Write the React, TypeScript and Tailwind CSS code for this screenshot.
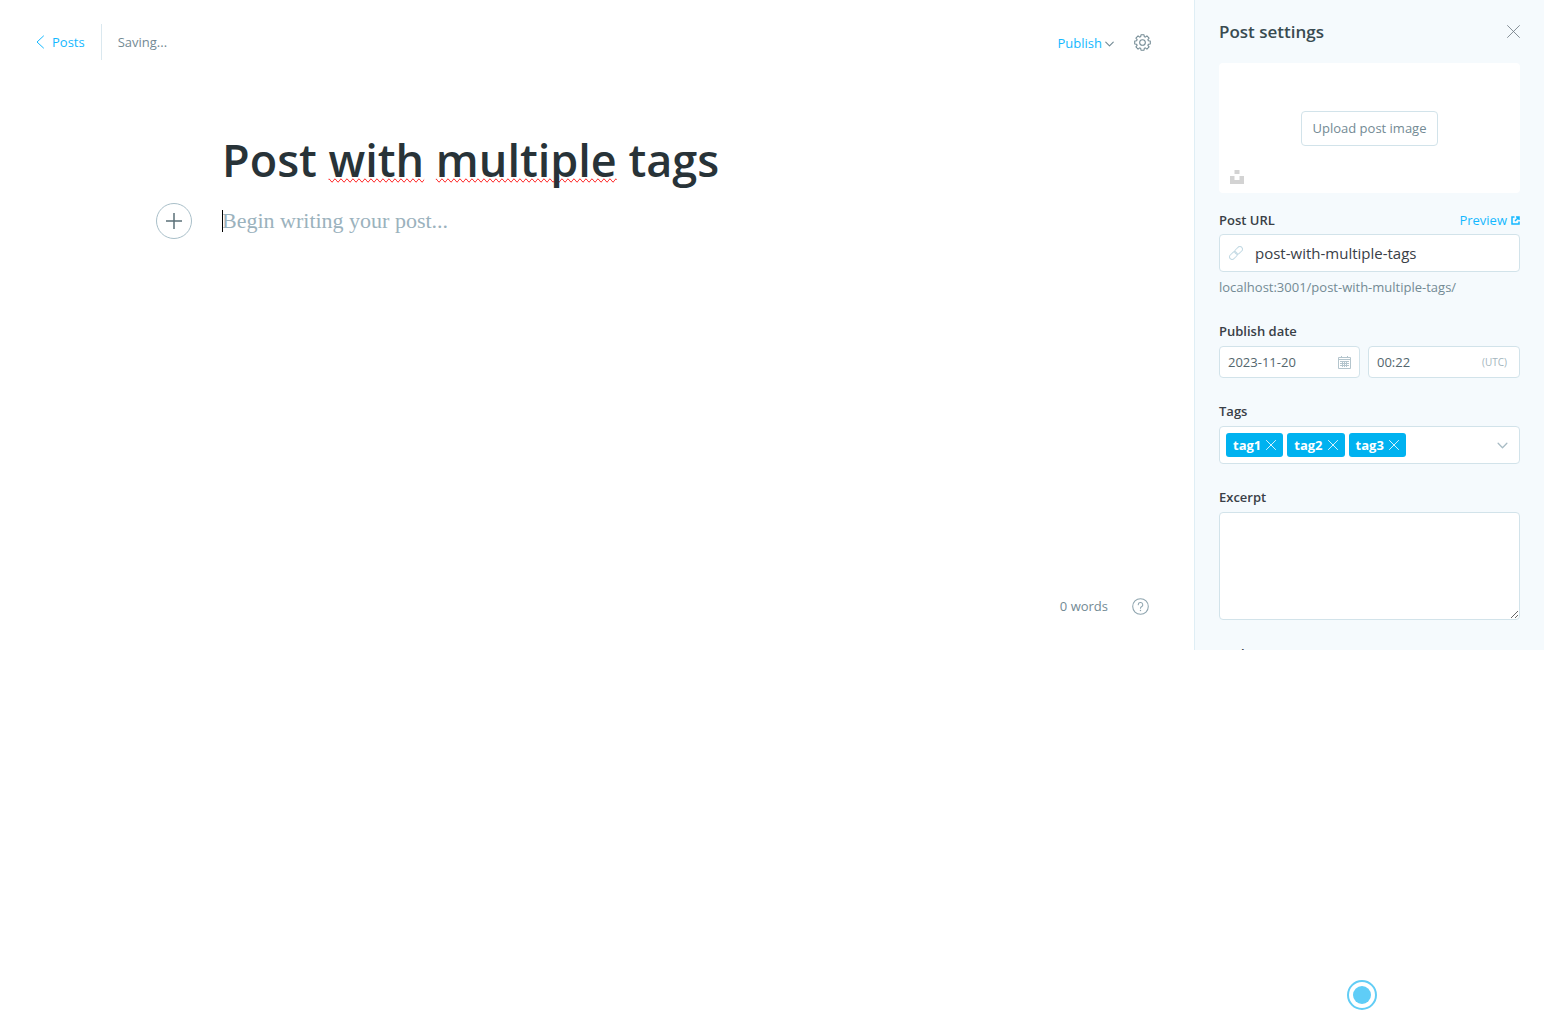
import { useId } from "react";
import type { ReactNode } from "react";

const label = "block text-[13px] leading-[18px] font-semibold text-[#394047]";
const field = "rounded border border-[#d2e3ea] bg-white";

function CloseIcon({ className }: { className: string }) {
  return (
    <svg viewBox="0 0 24 24" fill="none" stroke="currentColor" strokeLinecap="round" className={className} aria-hidden="true">
      <path d="M1 1 23 23M23 1 1 23" />
    </svg>
  );
}

function ChevronDown({ className }: { className: string }) {
  return (
    <svg viewBox="0 0 12 8" fill="none" stroke="currentColor" strokeWidth="1.5" className={className} aria-hidden="true">
      <path d="M1 1.5 6 6.5 11 1.5" strokeLinecap="round" strokeLinejoin="round" />
    </svg>
  );
}

// Outline of an eight-toothed gear centred on (12, 12).
const gearPoints = Array.from({ length: 8 }, (_, tooth) =>
  [[-17, 8.6], [-11, 11.2], [11, 11.2], [17, 8.6]].map(([offset, radius]) => {
    const angle = ((tooth * 45 + offset) * Math.PI) / 180;
    return (12 + radius * Math.sin(angle)).toFixed(2) + "," + (12 - radius * Math.cos(angle)).toFixed(2);
  }).join(" ")
).join(" ");

function GearIcon() {
  return (
    <svg viewBox="0 0 24 24" fill="none" stroke="currentColor" strokeWidth="1.5" strokeLinejoin="round" className="size-[17px]" aria-hidden="true">
      <circle cx="12" cy="12" r="4" />
      <polygon points={gearPoints} />
    </svg>
  );
}

function Tag({ children }: { children: string }) {
  return (
    <li className="flex h-6 items-center gap-[5px] rounded-[3px] bg-[#00b2f0] px-[7px] text-[13px] font-bold text-white">
      <span className="pt-0.5">{children}</span>
      <button type="button" aria-label={"Remove " + children}>
        <CloseIcon className="size-[10px] stroke-2" />
      </button>
    </li>
  );
}

function Group({ title, children }: { title: string; children: (id: string) => ReactNode }) {
  const id = useId();
  return (
    <div>
      <label htmlFor={id} className={label + " mb-1.5"}>{title}</label>
      {children(id)}
    </div>
  );
}

function Editor() {
  return (
    <main className="flex min-w-0 flex-1 flex-col">
      <header className="flex h-[84px] items-center justify-between pl-9 pr-[43px] text-[13px]">
        <div className="flex h-9 items-center">
          <a href="#posts" className="flex items-center gap-2 text-[#14b8ff]">
            <svg viewBox="0 0 8 14" fill="none" stroke="currentColor" className="h-[14px] w-2" aria-hidden="true">
              <path d="M7.5 1 1 7l6.5 6" strokeLinecap="round" strokeLinejoin="round" />
            </svg>
            <span className="pt-0.5">Posts</span>
          </a>
          <span className="mx-4 h-9 w-px bg-[#dae8ef]" />
          <span className="pt-0.5 text-[#738a94]">Saving...</span>
        </div>
        <div className="flex items-center gap-5">
          <button type="button" className="flex items-center gap-[3px] pt-[3px] text-[#14b8ff]">
            Publish
            <ChevronDown className="h-[6px] w-[9px] text-[#738a94]" />
          </button>
          <button type="button" aria-label="Settings" className="text-[#738a94]"><GearIcon /></button>
        </div>
      </header>

      <div className="mx-auto w-full max-w-[750px] flex-1 pt-[46px]">
        <h1 className="text-[45px] leading-[60px] font-semibold text-[#283338]">
          Post <span className="[text-decoration-line:spelling-error]">with</span>{" "}
          <span className="[text-decoration-line:spelling-error]">multiple</span> tags
        </h1>
        <div className="relative mt-[13px] flex h-9 items-center">
          <button type="button" aria-label="Add a card" className="absolute -left-[66px] top-0 flex size-9 items-center justify-center rounded-full border border-[#a9bfc9] text-[#5b7078]">
            <svg viewBox="0 0 16 16" stroke="currentColor" strokeWidth="1.5" className="size-4" aria-hidden="true"><path d="M8 0v16M0 8h16" /></svg>
          </button>
          <span className="absolute left-0 top-[7px] h-[22px] w-px bg-black" />
          <textarea
            aria-label="Post body"
            rows={1}
            placeholder="Begin writing your post..."
            className="h-[30px] w-full resize-none overflow-hidden font-['Liberation_Serif',serif] text-[22px] leading-[30px] outline-none placeholder:text-[#9bb2bd]"
          />
        </div>
      </div>

      <footer className="flex h-[88px] items-center justify-end gap-6 pr-[45px] text-[13px] text-[#738a94]">
        <span className="pt-0.5">0 words</span>
        <a href="#help" aria-label="Help" className="text-[#8fa5af]">
          <svg viewBox="0 0 24 24" fill="none" stroke="currentColor" strokeWidth="1.5" strokeLinecap="round" className="size-[17px]" aria-hidden="true">
            <circle cx="12" cy="12" r="11" />
            <path d="M8.8 9.5a3.2 3.2 0 1 1 4.6 2.9c-1 .5-1.4 1-1.4 2.1" />
            <path d="M12 17.6v.2" strokeWidth="2" />
          </svg>
        </a>
      </footer>
    </main>
  );
}

function Settings() {
  return (
    <aside className="w-[350px] shrink-0 overflow-hidden border-l border-[#dfeef5] bg-[#f5fafd] px-6">
      <div className="flex h-[63px] items-center justify-between">
        <h2 className="text-[17px] font-semibold text-[#394b51]">Post settings</h2>
        <button type="button" aria-label="Close" className="text-[#6c7880]"><CloseIcon className="size-[13px] stroke-[1.5]" /></button>
      </div>

      <div className="relative flex h-[130px] items-center justify-center rounded bg-white">
        <button type="button" className="h-[35px] rounded border border-[#d2e3ea] px-[11px] pt-0.5 text-[13px] text-[#738a94]">Upload post image</button>
        <button type="button" aria-label="Choose from Unsplash" className="absolute bottom-[9px] left-[11px] text-[#d3d3d3]">
          <svg viewBox="0 0 14 14" fill="currentColor" className="size-[14px]" aria-hidden="true"><path d="M4.5 0h5v4h-5zM0 6h4.5v4h5V6H14v8H0z" /></svg>
        </button>
      </div>

      <div className="mt-[18px]">
        <div className="mb-[5px] flex items-center justify-between">
          <label htmlFor="url" className={label}>Post URL</label>
          <a href="#preview" className="flex items-center gap-1 text-[13px] leading-[18px] text-[#14b8ff]">
            Preview
            <svg viewBox="0 0 9 9" fill="none" stroke="currentColor" strokeWidth="1.5" className="size-[9px]" aria-hidden="true"><path d="M3.5 1H1v7h7V5.5M5 1h3v3M8 1 4 5" /></svg>
          </a>
        </div>
        <div className={field + " flex h-[38px] items-center gap-3 pl-[9px]"}>
          <svg viewBox="0 0 24 24" fill="none" stroke="#c4dae4" strokeWidth="1.7" strokeLinecap="round" className="size-[14px] shrink-0" aria-hidden="true">
            <rect x="-7.5" y="-4.5" width="15" height="9" rx="4.5" transform="translate(7.5 16.5) rotate(-45)" />
            <rect x="-7.5" y="-4.5" width="15" height="9" rx="4.5" transform="translate(16.5 7.5) rotate(-45)" />
          </svg>
          <input id="url" defaultValue="post-with-multiple-tags" className="min-w-0 flex-1 text-[15px] text-[#394047] outline-none" />
        </div>
        <p className="mt-1.5 text-[13px] leading-[18px] text-[#738a94]">localhost:3001/post-with-multiple-tags/</p>
      </div>

      <div className="mt-[26px]">
        <Group title="Publish date">
          {(id) => (
            <div className="flex gap-2 text-[13px] text-[#54666d]">
              <div className={field + " flex h-8 w-[141px] items-center px-2"}>
                <input id={id} defaultValue="2023-11-20" className="min-w-0 flex-1 pt-0.5 outline-none" />
                <svg viewBox="0 0 13 13" fill="none" stroke="#b4c5cd" className="size-[13px]" aria-hidden="true">
                  <path d="M.5 1.5h12v11H.5zM.5 3.5h12M3.5 0v2M9.5 0v2M2 5.5h9M2 7.5h9M2 9.5h9M4.5 5v6M6.5 5v6M8.5 5v6" />
                </svg>
              </div>
              <div className={field + " flex h-8 min-w-0 flex-1 items-center pl-2 pr-3"}>
                <input aria-label="Publish time" defaultValue="00:22" className="min-w-0 flex-1 pt-0.5 outline-none" />
                <span className="text-[10px] text-[#a3b5bd]">(UTC)</span>
              </div>
            </div>
          )}
        </Group>
      </div>

      <div className="mt-6">
        <Group title="Tags">
          {(id) => (
            <div className={field + " flex h-[38px] items-center pl-1.5 pr-[11px]"}>
              <ul className="flex gap-1"><Tag>tag1</Tag><Tag>tag2</Tag><Tag>tag3</Tag></ul>
              <input id={id} className="min-w-0 flex-1 outline-none" />
              <ChevronDown className="h-[7px] w-[11px] text-[#a9bcc5]" />
            </div>
          )}
        </Group>
      </div>

      <div className="mt-6">
        <Group title="Excerpt">
          {(id) => <textarea id={id} className={field + " block h-[108px] w-full outline-none"} />}
        </Group>
      </div>

      <h3 className={label + " mt-[25px]"}>Authors</h3>
    </aside>
  );
}

export default function App() {
  return (
    <div className="min-h-screen bg-white font-['Open_Sans',sans-serif]">
      <div className="flex h-[650px]">
        <Editor />
        <Settings />
      </div>
      <button type="button" aria-label="Open beacon" className="fixed bottom-[10px] right-[167px] flex size-[30px] items-center justify-center rounded-full border-2 border-[#62cdf5] bg-white">
        <span className="size-[18px] rounded-full bg-[#5fcdf7]" />
      </button>
    </div>
  );
}
